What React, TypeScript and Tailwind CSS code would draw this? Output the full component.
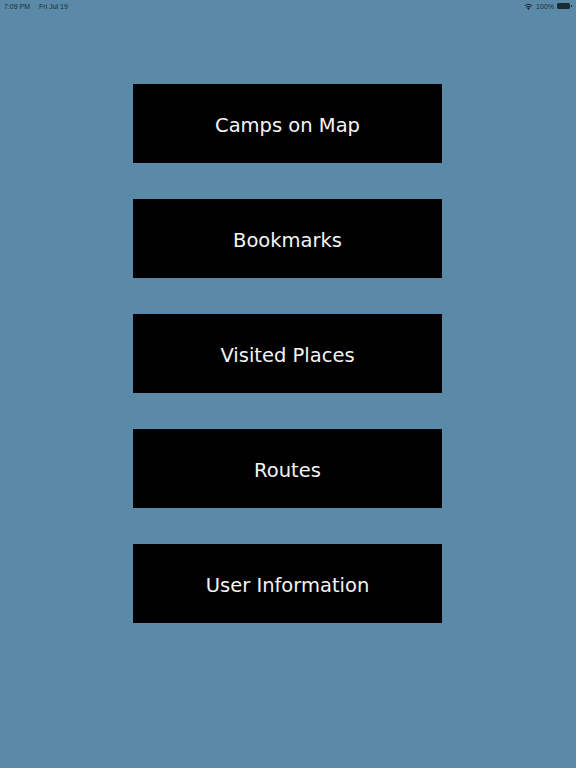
const items = ["Camps on Map", "Bookmarks", "Visited Places", "Routes", "User Information"];

function StatusBar() {
  return (
    <div className="flex h-[12px] items-center justify-between px-[4px] text-[7px] leading-none text-[#1c2a33] [font-family:'Liberation_Sans',sans-serif]">
      <div className="flex gap-[9px]">
        <span>7:09 PM</span>
        <span>Fri Jul 19</span>
      </div>
      <div className="flex items-center gap-[3px]">
        <svg width="9" height="7" viewBox="0 0 12 9" fill="#1c2a33">
          <path d="M6 9 L4 6.6 A3 3 0 0 1 8 6.6 Z" />
          <path d="M2.6 5 A5 5 0 0 1 9.4 5 L8.5 6 A3.7 3.7 0 0 0 3.5 6 Z" />
          <path d="M0.8 3 A7.5 7.5 0 0 1 11.2 3 L10.3 4 A6.2 6.2 0 0 0 1.7 4 Z" />
        </svg>
        <span>100%</span>
        <div className="flex items-center">
          <div className="h-[6px] w-[13px] rounded-[1.5px] bg-[#1c2a33]" />
          <div className="ml-[1px] h-[2px] w-[1px] bg-[#1c2a33]" />
        </div>
      </div>
    </div>
  );
}

export default function App() {
  return (
    <div className="min-h-[768px] w-full bg-[#5a8aa8]">
      <StatusBar />
      <div className="flex flex-col items-center gap-[36px] pt-[72px]">
        {items.map((label) => (
          <button
            key={label}
            className="mr-[1px] flex h-[79px] w-[309px] items-center justify-center bg-black pt-[4px] text-[19.5px] text-[#f4f4f4] [font-family:'DejaVu_Sans',sans-serif]"
          >
            {label}
          </button>
        ))}
      </div>
    </div>
  );
}
